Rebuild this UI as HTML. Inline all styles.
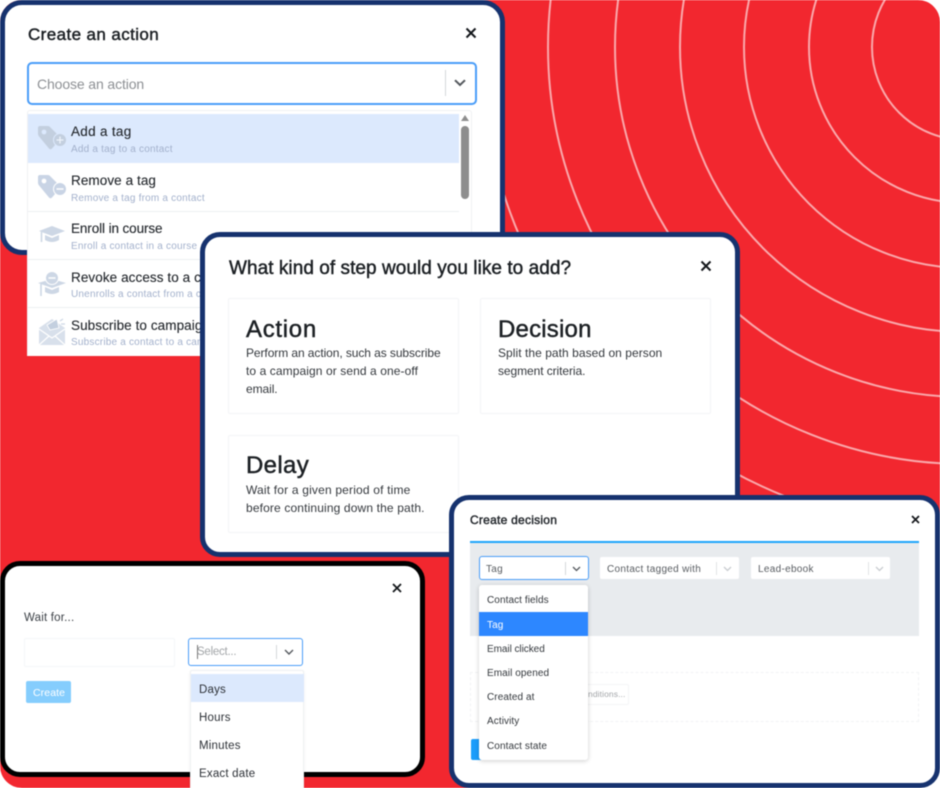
<!DOCTYPE html>
<html><head><meta charset="utf-8">
<style>
html,body{margin:0;padding:0;background:#fff}
#r{position:relative;width:940px;height:788px;overflow:hidden;background:#fff;font-family:"Liberation Sans",sans-serif;filter:blur(.5px)}
#r div{position:absolute;box-sizing:border-box}
.t{white-space:nowrap;line-height:1;color:#3a3f45}
.m{-webkit-text-stroke:.45px currentColor}
.x{font-size:0}
.x svg{display:block}
.sub{font-size:10px;color:#a3b1cc;letter-spacing:.2px}
.hd{font-size:13.5px;color:#24282d;letter-spacing:.08px;-webkit-text-stroke:.12px currentColor}
.b{font-size:12px;letter-spacing:-.08px;color:#34383d}
.o{font-size:11.5px;letter-spacing:.2px;color:#2c3036}
.d{font-size:10px;color:#33373c;letter-spacing:.08px}
</style></head><body>
<div id="r">
<div style="left:0;top:0;width:940px;height:788px;background:#f2272f;border-radius:22px;overflow:hidden">
<svg width="940" height="788" style="position:absolute;left:0;top:0" fill="none" stroke="#fff" stroke-opacity=".6" stroke-width="2">
<circle cx="965" cy="47" r="93"/><circle cx="965" cy="47" r="156"/><circle cx="965" cy="47" r="221"/><circle cx="965" cy="47" r="285"/><circle cx="965" cy="47" r="350"/><circle cx="965" cy="47" r="417"/><circle cx="965" cy="47" r="484"/>
</svg>
</div>

<!-- Modal 1 -->
<div style="left:0;top:0;width:505px;height:255px;background:#fff;border:5px solid #16326e;border-radius:22px"></div>
<div class="t m" style="left:28px;top:26px;font-size:17px;color:#1c2024;letter-spacing:.4px">Create an action</div>
<div class="x" style="left:465px;top:27px"><svg width="12" height="12"><path d="M1.5 1.5L10.5 10.5M10.5 1.5L1.5 10.5" stroke="#15181c" stroke-width="2"/></svg></div>
<div style="left:27px;top:62px;width:450px;height:43px;border:2px solid #4a9df8;border-radius:5px;background:#fff"></div>
<div class="t" style="left:37px;top:77px;font-size:14px;color:#8d9094;letter-spacing:-.12px">Choose an action</div>
<div style="left:445px;top:70px;width:1px;height:26px;background:#d5d8da"></div>
<div class="x" style="left:454px;top:79px"><svg width="12" height="8"><path d="M1 1.2L6 6L11 1.2" fill="none" stroke="#55595e" stroke-width="2"/></svg></div>

<div style="left:27px;top:110px;width:445px;height:246px;background:#fff;border:1px solid #f0f1f3;border-bottom:0;border-radius:3px 3px 0 0;overflow:hidden">
<div style="left:0;top:3px;width:431px;height:49px;background:#dce9fd"></div>
<div style="left:0;top:100px;width:431px;height:1px;background:#edeff2"></div>
<div style="left:0;top:148px;width:431px;height:1px;background:#edeff2"></div>
<div style="left:0;top:196px;width:431px;height:1px;background:#edeff2"></div>
<div style="left:433px;top:15px;width:8px;height:73px;background:#8e8e8e;border-radius:4px"></div>
<div style="left:433px;top:4px;width:0;height:0;border-left:4px solid transparent;border-right:4px solid transparent;border-bottom:6px solid #8e8e8e"></div>
</div>
<!-- tag icons -->
<svg style="position:absolute;left:37px;top:125px" width="30" height="26"><path d="M1 3Q1 1 3 1H11Q12.5 1 13.5 2.5L24 13L15 23.5Q13.5 25 12 23.5L2.5 12Q1 10.5 1 9Z" fill="#c3cfdf"/><circle cx="7" cy="7" r="2.4" fill="#dce9fd"/><circle cx="23" cy="15" r="6.5" fill="#c3cfdf" stroke="#dce9fd"/><path d="M19.5 15H26.5M23 11.5V18.5" stroke="#eef3fb" stroke-width="1.3"/></svg>
<svg style="position:absolute;left:37px;top:174px" width="30" height="26"><path d="M1 3Q1 1 3 1H11Q12.5 1 13.5 2.5L24 13L15 23.5Q13.5 25 12 23.5L2.5 12Q1 10.5 1 9Z" fill="#c9d4e5"/><circle cx="7" cy="7" r="2.4" fill="#fff"/><circle cx="23" cy="15" r="6.5" fill="#c9d4e5" stroke="#fff"/><path d="M19.5 15H26.5" stroke="#fff" stroke-width="1.5"/></svg>
<!-- cap -->
<svg style="position:absolute;left:38px;top:224px" width="28" height="22"><path d="M14 2L27 7L14 12L1 7Z" fill="#cdd7e5"/><path d="M7 11L14 14L21 11V16Q14 20 7 16Z" fill="#cdd7e5"/><path d="M3.5 8V18" stroke="#cdd7e5" stroke-width="1.6"/></svg>
<svg style="position:absolute;left:37px;top:270px" width="30" height="28"><path d="M15 9L29 13L15 18L1 13Z" fill="#cdd7e5"/><path d="M8 17L15 20L22 17V22Q15 26 8 22Z" fill="#cdd7e5"/><path d="M4 14V26" stroke="#cdd7e5" stroke-width="1.6"/><circle cx="15" cy="8" r="6.5" fill="#cdd7e5" stroke="#fff"/><path d="M11.5 8H18.5" stroke="#fff" stroke-width="1.5"/></svg>
<!-- envelope -->
<svg style="position:absolute;left:38px;top:316px" width="28" height="30"><path d="M1 12L14 3L27 12V29H1Z" fill="#d8e0eb"/><path d="M1 13L14 22L27 13M1 29L11 20M27 29L17 20" fill="none" stroke="#fff" stroke-width="1.2"/><path d="M9 9L19 3L21 12L12 14Z" fill="#c3cfdf" stroke="#fff" stroke-width=".8"/><path d="M22 5L25 3M23 8H27" stroke="#cdd7e5" stroke-width="1.2"/></svg>

<div class="t hd" style="left:71px;top:125px;letter-spacing:.3px">Add a tag</div>
<div class="t sub" style="left:71px;top:145px">Add a tag to a contact</div>
<div class="t hd" style="left:71px;top:174px">Remove a tag</div>
<div class="t sub" style="left:71px;top:194px">Remove a tag from a contact</div>
<div class="t hd" style="left:71px;top:222px;letter-spacing:-.1px">Enroll in course</div>
<div class="t sub" style="left:71px;top:242px">Enroll a contact in a course</div>
<div class="t hd" style="left:71px;top:271px">Revoke access to a course</div>
<div class="t sub" style="left:71px;top:290px">Unenrolls a contact from a course</div>
<div class="t hd" style="left:71px;top:319px">Subscribe to campaign</div>
<div class="t sub" style="left:71px;top:338px">Subscribe a contact to a campaign</div>

<!-- Modal 2 -->
<div style="left:200px;top:232px;width:540px;height:325px;background:#fff;border:5px solid #16326e;border-radius:20px"></div>
<div class="t m" style="left:229px;top:259px;font-size:19px;color:#1c2024;letter-spacing:.05px">What kind of step would you like to add?</div>
<div class="x" style="left:700px;top:260px"><svg width="12" height="12"><path d="M1.5 1.5L10.5 10.5M10.5 1.5L1.5 10.5" stroke="#15181c" stroke-width="2"/></svg></div>
<div style="left:228px;top:298px;width:231px;height:116px;border:1px solid #f3f4f6;border-radius:2px"></div>
<div style="left:480px;top:298px;width:231px;height:116px;border:1px solid #f3f4f6;border-radius:2px"></div>
<div style="left:228px;top:435px;width:231px;height:98px;border:1px solid #f3f4f6;border-radius:2px"></div>
<div class="t m" style="left:246px;top:318px;font-size:24px;color:#1c2024;letter-spacing:.7px">Action</div>
<div class="t m" style="left:498px;top:318px;font-size:24px;color:#1c2024;letter-spacing:.2px">Decision</div>
<div class="t m" style="left:246px;top:454px;font-size:24px;color:#1c2024;letter-spacing:.35px">Delay</div>
<div class="t b" style="left:246px;top:347px">Perform an action, such as subscribe</div>
<div class="t b" style="left:246px;top:365px;letter-spacing:.09px">to a campaign or send a one-off</div>
<div class="t b" style="left:246px;top:383px">email.</div>
<div class="t b" style="left:498px;top:347px;letter-spacing:.05px">Split the path based on person</div>
<div class="t b" style="left:498px;top:365px">segment criteria.</div>
<div class="t b" style="left:246px;top:484px;letter-spacing:.18px">Wait for a given period of time</div>
<div class="t b" style="left:246px;top:502px;letter-spacing:.14px">before continuing down the path.</div>

<!-- Modal 3 -->
<div style="left:0;top:561px;width:425px;height:216px;background:#fff;border:5px solid #000;border-radius:20px"></div>
<div class="x" style="left:392px;top:583px"><svg width="10" height="10"><path d="M1 1L9 9M9 1L1 9" stroke="#15181c" stroke-width="1.8"/></svg></div>
<div class="t" style="left:24px;top:613px;font-size:11.5px;letter-spacing:.2px">Wait for...</div>
<div style="left:24px;top:638px;width:151px;height:29px;border:1px solid #f4f6f8;border-radius:2px"></div>
<div style="left:188px;top:638px;width:115px;height:28px;border:1.5px solid #4a9df8;border-radius:3px"></div>
<div style="left:197px;top:645px;width:1px;height:14px;background:#777"></div>
<div class="t" style="left:197px;top:647px;font-size:11.5px;color:#a3a6a9;letter-spacing:-.25px">Select...</div>
<div style="left:276px;top:645px;width:1px;height:14px;background:#d5d8da"></div>
<div class="x" style="left:284px;top:649px"><svg width="10" height="7"><path d="M1 1L5 5L9 1" fill="none" stroke="#55595e" stroke-width="1.4"/></svg></div>
<div style="left:26px;top:681px;width:45px;height:22px;background:#85cdfd;border-radius:2px"></div>
<div class="t" style="left:33px;top:688px;font-size:10.5px;color:#fff;letter-spacing:.1px">Create</div>
<div style="left:190px;top:670px;width:114px;height:118px;background:#fff;border:1px solid #eff1f3;border-bottom:0;box-shadow:0 1px 3px rgba(0,0,0,.06);border-radius:2px 2px 0 0"></div>
<div style="left:191px;top:674px;width:113px;height:28px;background:#dce9fd"></div>
<div class="t o" style="left:199px;top:685px">Days</div>
<div class="t o" style="left:199px;top:713px">Hours</div>
<div class="t o" style="left:199px;top:741px">Minutes</div>
<div class="t o" style="left:199px;top:769px">Exact date</div>

<!-- Modal 4 -->
<div style="left:449px;top:495px;width:491px;height:293px;background:#fff;border:5px solid #16326e;border-radius:20px"></div>
<div class="t m" style="left:470px;top:514px;font-size:12px;color:#25292e;letter-spacing:.25px">Create decision</div>
<div class="x" style="left:911px;top:515px"><svg width="9" height="9"><path d="M1 1L8 8M8 1L1 8" stroke="#15181c" stroke-width="1.7"/></svg></div>
<div style="left:470px;top:541px;width:449px;height:95px;background:#e8ebee;border-top:2px solid #1fa5fb"></div>
<div style="left:479px;top:556px;width:110px;height:24px;background:#fff;border:1.5px solid #4a9df8;border-radius:3px"></div>
<div class="t" style="left:486px;top:565px;font-size:10px;color:#585c61;letter-spacing:.3px">Tag</div>
<div style="left:565px;top:562px;width:1px;height:13px;background:#d5d8da"></div>
<div class="x" style="left:572px;top:566px"><svg width="9" height="6"><path d="M1 1L4.5 4.5L8 1" fill="none" stroke="#55595e" stroke-width="1.3"/></svg></div>
<div style="left:600px;top:557px;width:139px;height:22px;background:#fff;border-radius:2px"></div>
<div class="t" style="left:607px;top:565px;font-size:10px;color:#585c61;letter-spacing:.3px">Contact tagged with</div>
<div style="left:716px;top:562px;width:1px;height:13px;background:#e2e4e6"></div>
<div class="x" style="left:723px;top:566px"><svg width="9" height="6"><path d="M1 1L4.5 4.5L8 1" fill="none" stroke="#c9ccd0" stroke-width="1.3"/></svg></div>
<div style="left:751px;top:557px;width:139px;height:22px;background:#fff;border-radius:2px"></div>
<div class="t" style="left:758px;top:565px;font-size:10px;color:#585c61;letter-spacing:.3px">Lead-ebook</div>
<div style="left:868px;top:562px;width:1px;height:13px;background:#e2e4e6"></div>
<div class="x" style="left:875px;top:566px"><svg width="9" height="6"><path d="M1 1L4.5 4.5L8 1" fill="none" stroke="#c9ccd0" stroke-width="1.3"/></svg></div>
<div style="left:470px;top:672px;width:449px;height:50px;border:1px dashed #f2f3f5"></div>
<div style="left:560px;top:684px;width:69px;height:21px;border:1px solid #f4f5f7;border-radius:2px"></div>
<div class="t" style="left:588px;top:690px;font-size:8.5px;color:#a3a6a9;letter-spacing:.1px">nditions...</div>
<div style="left:471px;top:739px;width:40px;height:21px;background:#1a9dfb;border-radius:2px"></div>
<div style="left:479px;top:585px;width:109px;height:175px;background:#fff;border-radius:3px;box-shadow:0 1px 5px rgba(0,0,0,.2)"></div>
<div style="left:479px;top:612px;width:109px;height:24px;background:#2d87ff"></div>
<div class="t d" style="left:487px;top:596px">Contact fields</div>
<div class="t d" style="left:487px;top:621px;color:#fff">Tag</div>
<div class="t d" style="left:487px;top:645px;letter-spacing:-.05px">Email clicked</div>
<div class="t d" style="left:487px;top:669px">Email opened</div>
<div class="t d" style="left:487px;top:693px">Created at</div>
<div class="t d" style="left:487px;top:717px">Activity</div>
<div class="t d" style="left:487px;top:742px">Contact state</div>
</div>
</body></html>
